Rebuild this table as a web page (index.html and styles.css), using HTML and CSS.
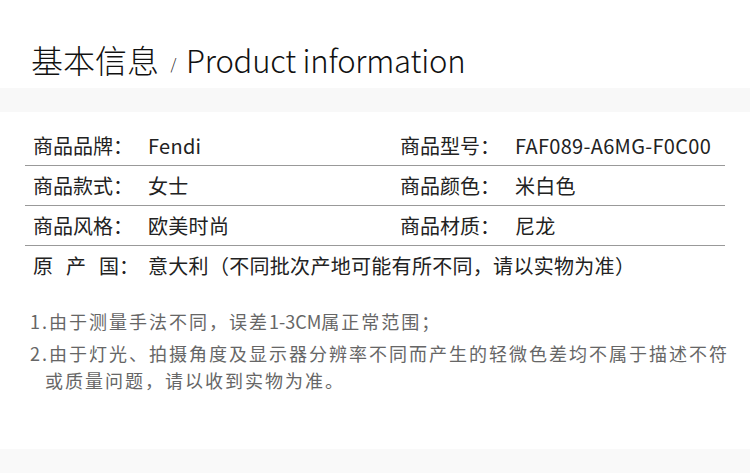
FILE: index.html
```html
<!DOCTYPE html>
<html lang="zh-CN">
<head>
<meta charset="utf-8">
<title>基本信息 / Product information</title>
<link rel="stylesheet" href="styles.css">
</head>
<body>
<div class="page">
  <header class="title">
    <span class="title-cn">基本信息</span>
    <span class="title-slash">/</span>
    <span class="title-en">Product information</span>
  </header>
  <div class="band"></div>
  <section class="table">
    <div class="row">
      <div class="cell cell-left"><span class="label">商品品牌：</span><span class="value">Fendi</span></div>
      <div class="cell cell-right"><span class="label">商品型号：</span><span class="value">FAF089-A6MG-F0C00</span></div>
    </div>
    <div class="row">
      <div class="cell cell-left"><span class="label">商品款式：</span><span class="value">女士</span></div>
      <div class="cell cell-right"><span class="label">商品颜色：</span><span class="value">米白色</span></div>
    </div>
    <div class="row">
      <div class="cell cell-left"><span class="label">商品风格：</span><span class="value">欧美时尚</span></div>
      <div class="cell cell-right"><span class="label">商品材质：</span><span class="value">尼龙</span></div>
    </div>
    <div class="row row-last">
      <div class="cell cell-full"><span class="label"><span class="spaced">原产</span>国：</span><span class="value">意大利（不同批次产地可能有所不同，请以实物为准）</span></div>
    </div>
  </section>
  <section class="notes">
    <p class="note">1.由于测量手法不同，误差<span class="latin">1-3CM</span>属正常范围；</p>
    <p class="note"><span class="line">2.由于灯光、拍摄角度及显示器分辨率不同而产生的轻微色差均不属于描述不符</span>或质量问题，请以收到实物为准。</p>
  </section>
  <div class="band band-bottom"></div>
</div>
</body>
</html>
```

FILE: styles.css
```css
html, body {
  margin: 0;
  padding: 0;
  background: #ffffff;
}

body {
  font-family: "Noto Sans CJK SC", "Noto Sans", sans-serif;
  color: #222222;
}

.page {
  width: 750px;
  height: 473px;
  display: flex;
  flex-direction: column;
  overflow: hidden;
}

.title {
  height: 32px;
  padding: 43px 0 13px 31px;
  line-height: 32px;
  font-weight: 300;
  color: #111111;
  white-space: nowrap;
}

.title-cn {
  font-size: 32px;
}

.title-slash {
  font-size: 15px;
  position: relative;
  top: -3px;
  margin: 0 6px 0 8px;
}

.title-en {
  font-size: 31px;
  letter-spacing: -0.2px;
}

.band {
  height: 24px;
  background: #f8f8f8;
}

.table {
  margin: 14px 25px 0 25px;
  display: flex;
  flex-direction: column;
}

.row {
  display: grid;
  grid-template-columns: 367px 1fr;
  height: 39px;
  border-bottom: 1px solid #999999;
  align-items: center;
}

.row-last {
  border-bottom: none;
  grid-template-columns: 1fr;
}

.cell {
  display: flex;
  align-items: center;
  padding-left: 8px;
  font-size: 20px;
  line-height: 28px;
  white-space: nowrap;
}

.label {
  width: 115px;
  flex: none;
}

.spaced {
  letter-spacing: 13px;
}

.value {
  letter-spacing: 0.3px;
}

.notes {
  margin: 23px 0 0 30px;
  color: #666666;
  font-size: 18px;
  line-height: 27px;
  letter-spacing: 2px;
  flex: 1;
}

.latin {
  letter-spacing: 0;
}

.note {
  margin: 0 0 5px 0;
  padding-left: 15px;
  text-indent: -15px;
}

.line {
  white-space: nowrap;
}

.line::after {
  content: "";
  display: block;
}

.band-bottom {
  height: 24px;
  flex: none;
  background: #f9f9f9;
}
```
